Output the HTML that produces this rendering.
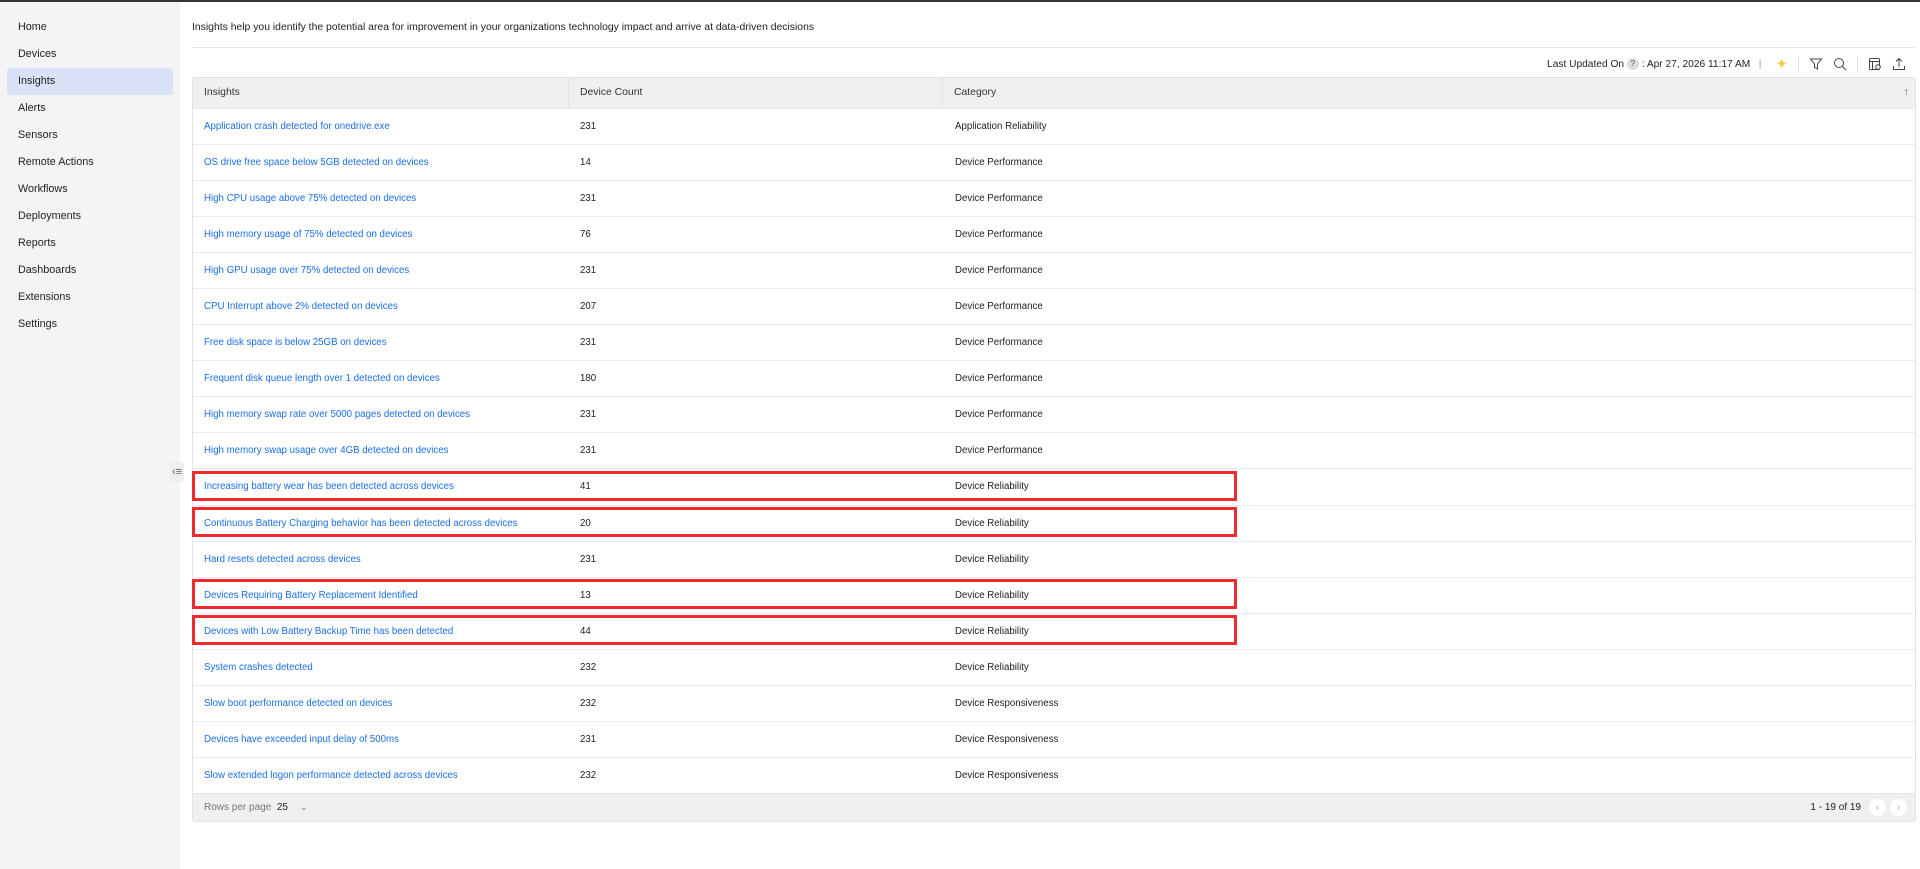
<!DOCTYPE html>
<html><head><style>
*{box-sizing:border-box;margin:0;padding:0}
body{width:1920px;height:869px;overflow:hidden;background:#fff;font-family:"Liberation Sans",sans-serif;font-size:11px;color:#222;position:relative}
.top{position:absolute;left:0;top:0;width:1920px;height:2px;background:#333}
.side{position:absolute;left:0;top:2px;width:180px;height:867px;background:#f4f4f6}
.nav{position:absolute;left:7px;width:166px;height:27px;line-height:27px;padding-left:11px;font-size:10.8px;color:#222;border-radius:3px}
.nav.act{background:#d9e2f6}
.desc{position:absolute;left:192px;top:22px;font-size:10.4px;color:#222}
.sep{position:absolute;left:192px;top:47px;width:1724px;height:1px;background:#e8e8ec}
.tool{position:absolute;right:14px;top:55px;height:18px;display:flex;align-items:center;font-size:10.2px;color:#222}
.tbl{position:absolute;left:192px;top:77px;width:1724px;border:1px solid #e2e3e7;border-radius:3px;overflow:hidden}
.hd{height:30px;background:#eff0f2;display:flex;font-size:10.4px;color:#333;position:relative}
.hd div{line-height:30px;padding-left:11px}
.row{height:36.05px;display:flex;border-top:1px solid #ececef;align-items:center;font-size:9.7px}
.c1{width:376px;padding-left:11px}
.c2{width:375px;padding-left:11px}
.c3{padding-left:11px}
.row .c1{color:#1a6fe6}
.ft{height:28px;background:#eff0f2;border-top:1px solid #e2e3e7;display:flex;align-items:center;font-size:10px;position:relative}
.red{position:absolute;left:192px;width:1045px;height:30px;border:3px solid #f0292f}
.circ{display:inline-block;width:17px;height:17px;border-radius:50%;background:#fff;text-align:center;line-height:17px;color:#aaa;font-size:10px;margin-left:4px}
</style></head><body>
<div class="top"></div>
<div class="side">
<div class="nav" style="top:12px">Home</div>
<div class="nav" style="top:39px">Devices</div>
<div class="nav act" style="top:66px">Insights</div>
<div class="nav" style="top:93px">Alerts</div>
<div class="nav" style="top:120px">Sensors</div>
<div class="nav" style="top:147px">Remote Actions</div>
<div class="nav" style="top:174px">Workflows</div>
<div class="nav" style="top:201px">Deployments</div>
<div class="nav" style="top:228px">Reports</div>
<div class="nav" style="top:255px">Dashboards</div>
<div class="nav" style="top:282px">Extensions</div>
<div class="nav" style="top:309px">Settings</div>
</div>
<div style="position:absolute;left:170px;top:462px;width:14px;height:20px;background:#eceef1;border-radius:3px;font-size:11px;color:#666;line-height:20px;text-align:center">&lsaquo;&#8801;</div>
<div class="desc">Insights help you identify the potential area for improvement in your organizations technology impact and arrive at data-driven decisions</div>
<div class="sep"></div>
<div class="tool">Last Updated On&nbsp;<span style="display:inline-block;width:12px;height:12px;border-radius:50%;background:#ddd;font-size:8px;text-align:center;line-height:12px;color:#555">?</span>&nbsp;: Apr 27, 2026 11:17 AM&nbsp;&nbsp;&nbsp;<span style="color:#999">|</span>
<span style="color:#f7c948;font-size:15px;margin-left:14px">&#10022;</span><span style="width:1px;height:14px;background:#ddd;margin:0 10px"></span>
<svg width="14" height="14" viewBox="0 0 14 14" fill="none" stroke="#444"><path d="M1.5 2h11L8.5 7v5l-3-1.5V7z"/></svg>
<svg width="14" height="14" viewBox="0 0 14 14" fill="none" stroke="#444" style="margin-left:10px"><circle cx="6" cy="6" r="4.5"/><path d="M9.5 9.5L13 13"/></svg>
<span style="width:1px;height:14px;background:#ddd;margin:0 10px"></span>
<svg width="14" height="14" viewBox="0 0 14 14" fill="none" stroke="#444"><rect x="1.5" y="1.5" width="10" height="11" rx="1"/><path d="M1.5 4.5h10M4.5 4.5v8"/><circle cx="10" cy="10" r="2.3" fill="#fff"/></svg>
<svg width="14" height="14" viewBox="0 0 14 14" fill="none" stroke="#444" style="margin-left:10px"><path d="M7 10V1.5M4 4.5l3-3 3 3M1.5 9v3.5h11V9"/></svg>
</div>
<div class="tbl">
<div class="hd"><div class="c1" style="border-right:1px solid #e2e3e7">Insights</div><div class="c2" style="border-right:1px solid #e2e3e7;width:374px">Device Count</div><div class="c3">Category</div><span style="position:absolute;right:6px;top:8px;color:#777;font-size:11px">&uarr;</span></div>
<div class="row"><div class="c1">Application crash detected for onedrive.exe</div><div class="c2">231</div><div class="c3">Application Reliability</div></div>
<div class="row"><div class="c1">OS drive free space below 5GB detected on devices</div><div class="c2">14</div><div class="c3">Device Performance</div></div>
<div class="row"><div class="c1">High CPU usage above 75% detected on devices</div><div class="c2">231</div><div class="c3">Device Performance</div></div>
<div class="row"><div class="c1">High memory usage of 75% detected on devices</div><div class="c2">76</div><div class="c3">Device Performance</div></div>
<div class="row"><div class="c1">High GPU usage over 75% detected on devices</div><div class="c2">231</div><div class="c3">Device Performance</div></div>
<div class="row"><div class="c1">CPU Interrupt above 2% detected on devices</div><div class="c2">207</div><div class="c3">Device Performance</div></div>
<div class="row"><div class="c1">Free disk space is below 25GB on devices</div><div class="c2">231</div><div class="c3">Device Performance</div></div>
<div class="row"><div class="c1">Frequent disk queue length over 1 detected on devices</div><div class="c2">180</div><div class="c3">Device Performance</div></div>
<div class="row"><div class="c1">High memory swap rate over 5000 pages detected on devices</div><div class="c2">231</div><div class="c3">Device Performance</div></div>
<div class="row"><div class="c1">High memory swap usage over 4GB detected on devices</div><div class="c2">231</div><div class="c3">Device Performance</div></div>
<div class="row"><div class="c1">Increasing battery wear has been detected across devices</div><div class="c2">41</div><div class="c3">Device Reliability</div></div>
<div class="row"><div class="c1">Continuous Battery Charging behavior has been detected across devices</div><div class="c2">20</div><div class="c3">Device Reliability</div></div>
<div class="row"><div class="c1">Hard resets detected across devices</div><div class="c2">231</div><div class="c3">Device Reliability</div></div>
<div class="row"><div class="c1">Devices Requiring Battery Replacement Identified</div><div class="c2">13</div><div class="c3">Device Reliability</div></div>
<div class="row"><div class="c1">Devices with Low Battery Backup Time has been detected</div><div class="c2">44</div><div class="c3">Device Reliability</div></div>
<div class="row"><div class="c1">System crashes detected</div><div class="c2">232</div><div class="c3">Device Reliability</div></div>
<div class="row"><div class="c1">Slow boot performance detected on devices</div><div class="c2">232</div><div class="c3">Device Responsiveness</div></div>
<div class="row"><div class="c1">Devices have exceeded input delay of 500ms</div><div class="c2">231</div><div class="c3">Device Responsiveness</div></div>
<div class="row"><div class="c1">Slow extended logon performance detected across devices</div><div class="c2">232</div><div class="c3">Device Responsiveness</div></div>
<div class="ft"><span style="padding-left:11px;color:#777">Rows per page</span>&nbsp;&nbsp;<span>25</span><span style="color:#777;margin-left:12px;font-size:9px">&#8964;</span>
<span style="position:absolute;right:54px;top:8px">1 - 19 of 19</span><span style="position:absolute;right:8px;top:5px"><span class="circ">&lsaquo;</span><span class="circ">&rsaquo;</span></span></div>
</div>
<div class="red" style="top:471px"></div>
<div class="red" style="top:507px"></div>
<div class="red" style="top:579px"></div>
<div class="red" style="top:615px"></div>
</body></html>
